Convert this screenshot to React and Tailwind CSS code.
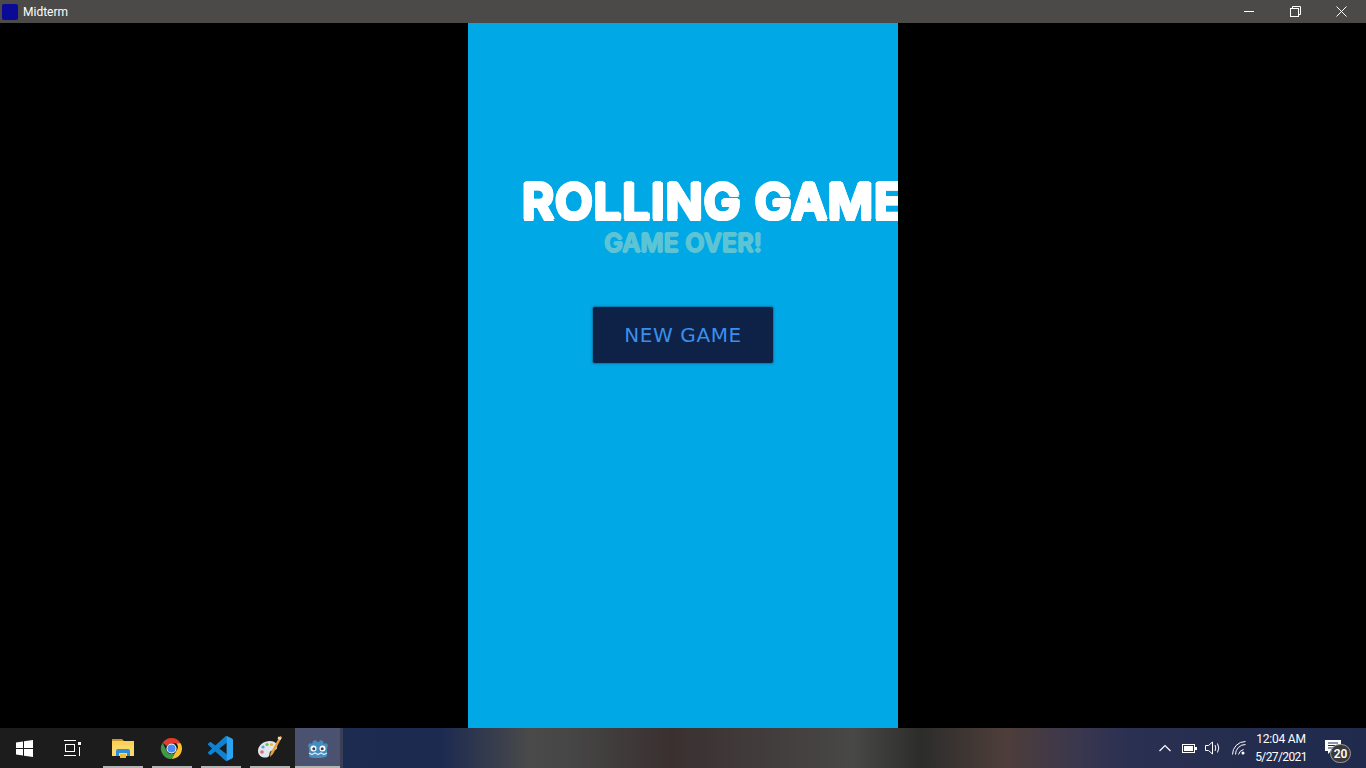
import React from "react";

const TaskSlot = ({ children, active }) => (
  <div className={`relative flex h-full items-center justify-center ${active ? "ml-px w-[45px] bg-[#4b5270]" : "w-[49px]"}`}>
    {children}
    <div className={`absolute bottom-0 h-[2px] bg-[#b4b4b4] ${active ? "left-0 right-0" : "left-[5px] right-[4px]"}`} />
  </div>
);

const Explorer = () => (
  <svg width="24" height="22" viewBox="0 0 24 22">
    <path d="M1 2h10l2 2h-12z" fill="#c9962a" />
    <rect x="1" y="4" width="22" height="15" fill="#fbd257" />
    <rect x="1" y="8" width="22" height="11" fill="#fcd76a" />
    <path d="M5 19v-5q0-2 2-2h10q2 0 2 2v5h-3v-3h-8v3z" fill="#2d8fd5" />
    <rect x="9" y="17" width="6" height="4" fill="#f2b92c" />
  </svg>
);

const Chrome = () => (
  <svg width="23" height="23" viewBox="0 0 48 48">
    <path d="M24 2a22 22 0 0 1 19 11H24a11 11 0 0 0-10 6L5.500 12A22 22 0 0 1 24 2z" fill="#e33b2e" />
    <path d="M43 13a22 22 0 0 1-19 33l10-17a11 11 0 0 0 0-16z" fill="#fbc02d" />
    <path d="M24 46A22 22 0 0 1 5.500 12L14 29a11 11 0 0 0 20 0l-10 17z" fill="#3d9b46" />
    <circle cx="24" cy="24" r="10.500" fill="#fff" />
    <circle cx="24" cy="24" r="8.500" fill="#4b8bf5" />
  </svg>
);

const VSCode = () => (
  <svg width="25" height="25" viewBox="0 0 24 24">
    <path
      d="M23.150 2.587L18.210.210a1.494 1.494 0 0 0-1.705.290l-9.460 8.630-4.120-3.128a.999.999 0 0 0-1.276.057L.327 7.261A1 1 0 0 0 .326 8.740L3.899 12 .326 15.260a1 1 0 0 0 .001 1.479L1.650 17.940a.999.999 0 0 0 1.276.057l4.120-3.128 9.460 8.630a1.492 1.492 0 0 0 1.704.290l4.942-2.377A1.500 1.500 0 0 0 24 20.060V3.939a1.500 1.500 0 0 0-.850-1.352zm-5.146 14.861L10.826 12l7.178-5.448v10.896z"
      fill="#0e83d4"
    />
    <path d="M18 0l5.150 2.587A1.500 1.500 0 0 1 24 3.939V20.060a1.500 1.500 0 0 1-.850 1.352L18 24z" fill="#2ba3ee" />
  </svg>
);

const Palette = () => (
  <svg width="26" height="26" viewBox="0 0 26 26">
    <path d="M1 16C1 10 7 6 13 6c5 0 8 3 7 7-1 3-4 2-6 3-2 1-1 3-2 5-2 3-11 2-11-5z" fill="#dfe6ee" />
    <circle cx="6" cy="12" r="1.600" fill="#4aa8e0" />
    <circle cx="10" cy="9.500" r="1.600" fill="#6bbf59" />
    <circle cx="14.500" cy="9.500" r="1.600" fill="#f2b632" />
    <circle cx="5" cy="17" r="1.800" fill="#e56a6a" />
    <path d="M23 1l2 1-9 17-3 3 .5-4z" fill="#e8a23d" />
    <path d="M21.500 1.500l3 1.500-1 2-3-1.500z" fill="#efe3c8" />
  </svg>
);

const Godot = () => (
  <svg width="24" height="22" viewBox="0 0 24 22">
    <path d="M2 8l2-2 2 1 1-3 3-1 1 2h2l1-2 3 1 1 3 2-1 2 2-1 4v7q-2 2-10 2T3 19v-7z" fill="#478cbf" />
    <circle cx="7.500" cy="11.500" r="3" fill="#fff" />
    <circle cx="16.500" cy="11.500" r="3" fill="#fff" />
    <circle cx="7.800" cy="11.800" r="1.500" fill="#33404d" />
    <circle cx="16.200" cy="11.800" r="1.500" fill="#33404d" />
    <path d="M3 16l3 1.500 3-1.500 3 1.500 3-1.500 3 1.500 3-1.500" fill="none" stroke="#dfeaf2" strokeWidth="1.200" />
  </svg>
);

export default function App() {
  return (
    <div className="flex h-screen w-full flex-col overflow-hidden bg-black font-['Roboto',sans-serif]">
      {/* Title bar */}
      <div className="flex h-[23px] shrink-0 items-center justify-between bg-[#4c4a48]">
        <div className="flex items-center">
          <div className="ml-[2px] h-4 w-4 rounded-[2px] bg-[#0a0a96]" />
          <span className="ml-[5px] text-[12px] text-white">Midterm</span>
        </div>
        <div className="mr-[2px] flex h-full">
          <div className="flex w-[46px] items-center justify-center">
            <div className="h-px w-[10px] bg-white" />
          </div>
          <div className="flex w-[46px] items-center justify-center">
            <svg width="11" height="11" viewBox="0 0 11 11" fill="none" stroke="#fff">
              <rect x="0.500" y="2.500" width="8" height="8" />
              <path d="M2.500 2.500v-2h8v8h-2" />
            </svg>
          </div>
          <div className="flex w-[46px] items-center justify-center">
            <svg width="11" height="11" viewBox="0 0 11 11" fill="none" stroke="#fff">
              <path d="M0.500 0.500l10 10M10.500 0.500l-10 10" />
            </svg>
          </div>
        </div>
      </div>

      {/* Game viewport */}
      <div className="flex min-h-0 flex-1 justify-center">
        <div className="flex w-[430px] flex-col items-center overflow-hidden bg-[#00a8e6] pt-[151px]">
          <h1 className="ml-[54px] h-[55px] self-start whitespace-nowrap font-['Inter',sans-serif] text-[49px] leading-[55px] font-semibold tracking-[1px] text-white [text-shadow:2px_0_0_#fff,-2px_0_0_#fff,0_2px_0_#fff,0_-2px_0_#fff,1.500px_1.500px_0_#fff,-1.500px_1.500px_0_#fff,1.500px_-1.500px_0_#fff,-1.500px_-1.500px_0_#fff]">
            ROLLING GAME
          </h1>
          <p className="h-[28px] font-['Inter',sans-serif] text-[25px] leading-[28px] font-semibold tracking-[0.1px] text-[#5cc4d4] [text-shadow:1px_0_0_#5cc4d4,-1px_0_0_#5cc4d4,0_1px_0_#5cc4d4,0_-1px_0_#5cc4d4]">
            GAME OVER!
          </p>
          <button className="mt-[49px] h-[58px] w-[182px] rounded-[3px] border border-[#0a7fb0] bg-[#0e2146] font-['DejaVu_Sans',sans-serif] text-[20px] tracking-[0.6px] text-[#3a8fee] shadow-[0_0_3px_#0a86bd]">
            NEW GAME
          </button>
        </div>
      </div>

      {/* Taskbar */}
      <div className="flex h-10 shrink-0 items-center bg-[linear-gradient(90deg,#1c1c1c_0,#1c1c1c_340px,#3a3f55_340px,#3a3f55_343px,#1c2b50_343px,#1c2a50_440px,#4a4a4a_530px,#464646_570px,#3a3030_670px,#484846_853px,#2c2c2a_921px,#4e3e3a_1005px,#38364f_1085px,#2a3052_1130px,#1f2a4c_1366px)]">
        <div className="flex h-full w-12 items-center justify-center">
          <svg width="17" height="17" viewBox="0 0 17 17" fill="#fff">
            <path d="M0 2.500l7-1v6.500H0zM8 1.300L17 0v8H8zM0 9h7v6.500l-7-1zM8 9h9v8l-9-1.300z" />
          </svg>
        </div>
        <div className="flex h-full w-[50px] items-center justify-center">
          <svg className="-ml-[2px]" width="17" height="16" viewBox="0 0 17 16" fill="none" stroke="#fff">
            <path d="M0 0.500h12M0 15.500h12" />
            <rect x="1.500" y="4.500" width="9" height="7" />
            <path d="M15.500 7v9" />
            <rect x="14" y="2" width="3" height="3" fill="#fff" stroke="none" />
          </svg>
        </div>
        <TaskSlot><Explorer /></TaskSlot>
        <TaskSlot><Chrome /></TaskSlot>
        <TaskSlot><VSCode /></TaskSlot>
        <TaskSlot><Palette /></TaskSlot>
        <TaskSlot active><Godot /></TaskSlot>

        {/* Tray */}
        <div className="ml-auto flex h-full items-center text-white">
          <svg width="12" height="8" viewBox="0 0 12 8" fill="none" stroke="#fff" strokeWidth="1.200">
            <path d="M0.500 7L6 1.500 11.500 7" />
          </svg>
          <svg className="ml-[11px]" width="15" height="9" viewBox="0 0 15 9" fill="none" stroke="#fff">
            <rect x="0.500" y="0.500" width="12" height="8" />
            <rect x="2" y="2" width="9" height="5" fill="#fff" stroke="none" />
            <rect x="13" y="3" width="2" height="3" fill="#fff" stroke="none" />
          </svg>
          <svg className="ml-[8px]" width="16" height="14" viewBox="0 0 16 14" fill="none" stroke="#fff">
            <path d="M0.500 4.500h3l4-3.500v12l-4-3.500h-3z" />
            <path d="M10 4q1.500 3 0 6M12.500 2.500q2.500 4.500 0 9" />
          </svg>
          <svg className="ml-[11px]" width="14" height="14" viewBox="0 0 14 14" fill="none" stroke="#fff">
            <path d="M0.500 13.500a13 13 0 0 1 13-13M3.500 13.500a10 10 0 0 1 10-10M6.500 13.500a7 7 0 0 1 5-5" />
            <circle cx="11" cy="12" r="1.500" fill="#fff" stroke="none" />
          </svg>
          <div className="ml-[9px] flex w-[52px] flex-col items-center text-[12px] leading-[18px]">
            <span className="tracking-[-0.2px]">12:04 AM</span>
            <span className="tracking-[-0.6px]">5/27/2021</span>
          </div>
          <div className="relative ml-[18px] mr-[19px] h-full w-[22px]">
            <svg className="absolute left-0 top-[12px]" width="16" height="14" viewBox="0 0 16 14">
              <path d="M0 0h16v11H6l-3 3v-3H0z" fill="#fff" />
              <path d="M3 3h10M3 5.500h10M3 8h10" stroke="#1c2b50" />
            </svg>
            <div className="absolute left-[5px] top-[16px] flex h-[19px] w-[21px] items-center justify-center rounded-full border border-[#9a9a9a] bg-[#3a3a3a] text-[12px] font-semibold">
              20
            </div>
          </div>
        </div>
      </div>
    </div>
  );
}
